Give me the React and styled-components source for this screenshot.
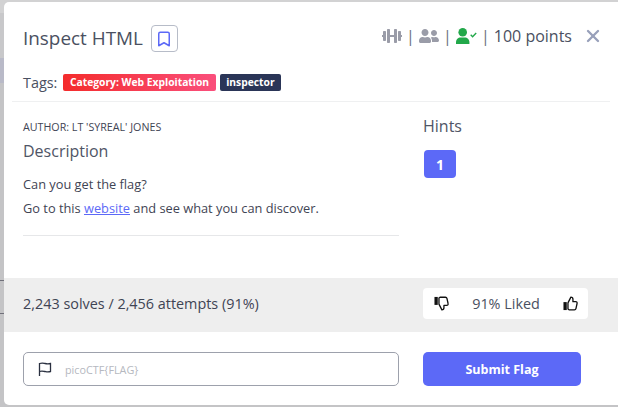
import React from 'react';
import styled, { createGlobalStyle } from 'styled-components';
import { Bookmark, X } from 'lucide-react';
import { FaDumbbell, FaUserFriends } from 'react-icons/fa';

const GlobalStyle = createGlobalStyle`
  html, body {
    margin: 0;
    padding: 0;
    background: #c4c4c6;
    font-family: "Open Sans", "Liberation Sans", sans-serif;
    overflow: hidden;
  }
`;

const Backdrop = styled.div`
  width: 618px;
  height: 407px;
  padding: 2px 0 2px 4px;
  box-sizing: border-box;
  background: linear-gradient(
    180deg,
    #d2d2d3 0 13px,
    #c8c8ca 13px 58px,
    #b9bac8 58px 83px,
    #c4c4c6 83px 280px,
    #70707a 280px 281px,
    #c4c4c6 281px 313px,
    #70707a 313px 314px,
    #c4c4c6 314px
  );
`;

const Modal = styled.div`
  height: 403px;
  background: #fff;
  border-radius: 5px 0 0 5px;
  display: flex;
  flex-direction: column;
  color: #3f4454;
`;

const Header = styled.div`
  height: 99px;
  margin: 0 8px 0 8px;
  padding: 0 7px 0 11px;
  border-bottom: 1px solid #eff0f1;
`;

const TitleRow = styled.div`
  display: flex;
  align-items: center;
  height: 33px;
  padding-top: 19px;
`;

const Title = styled.h1`
  margin: 0;
  font-size: 18.9px;
  font-weight: 400;
  color: #4a5061;
`;

const BookmarkButton = styled.div`
  width: 27px;
  height: 27px;
  margin: 2px 0 0 8px;
  border: 1px solid #b7bcc8;
  border-radius: 4px;
  box-sizing: border-box;
  display: flex;
  align-items: center;
  justify-content: center;
  color: #5c69f7;
`;

const Stats = styled.div`
  margin: 0 0 3px auto;
  display: flex;
  align-items: center;
  font-size: 16px;
  color: #4a5061;
`;

const Sep = styled.span`
  width: 17px;
  text-align: center;
  color: #6b7080;
`;

const CloseButton = styled.span`
  margin: 0 0 3px 11px;
  display: flex;
  color: #98a0ba;
`;

const TagRow = styled.div`
  display: flex;
  align-items: center;
  margin-top: 19px;
  gap: 4px;
  font-size: 14.4px;
  color: #4a5061;
`;

const TagLabel = styled.span`
  margin-right: 2px;
`;

const Tag = styled.span`
  height: 17px;
  line-height: 17px;
  padding: 0 6.5px;
  border-radius: 2px;
  font-size: 10.3px;
  font-weight: 700;
  color: #fff;
  background: ${props => props.$bg};
`;

const Body = styled.div`
  flex: 1;
  display: grid;
  grid-template-columns: 376px 1fr;
  column-gap: 24px;
  padding: 0 0 0 19px;
`;

const Author = styled.div`
  margin-top: 17px;
  font-size: 10.7px;
  line-height: 16px;
`;

const Heading = styled.h2`
  margin: 0;
  font-size: 16px;
  font-weight: 400;
  line-height: 22px;
  color: #4f5566;
`;

const DescHeading = styled(Heading)`
  margin-top: 5px;
`;

const HintsHeading = styled(Heading)`
  margin-top: 13px;
`;

const Paragraph = styled.div`
  margin-top: 10px;
  font-size: 12.8px;
  color: #3f4454;
`;

const Line = styled.div`
  line-height: 24px;
`;

const Link = styled.a`
  color: #5c69f7;
  text-decoration: underline;
`;

const Rule = styled.hr`
  margin: 15px 0 0;
  border: 0;
  border-top: 1px solid #e6e7e9;
`;

const HintButton = styled.div`
  width: 32px;
  height: 28px;
  margin: 13px 0 0 1px;
  background: #5c69f7;
  border-radius: 4px;
  color: #fff;
  font-size: 14px;
  font-weight: 700;
  display: flex;
  align-items: center;
  justify-content: center;
`;

const SolvesBar = styled.div`
  height: 54px;
  background: #eeeeee;
  display: grid;
  grid-template-columns: 376px 165px;
  column-gap: 24px;
  align-items: center;
  padding: 0 0 3px 19px;
  box-sizing: border-box;
  font-size: 14.4px;
  color: #3f4454;
`;

const LikeBox = styled.div`
  height: 31px;
  background: #fff;
  border-radius: 4px;
  display: flex;
  align-items: center;
  justify-content: space-between;
  padding: 0 10px 0 11px;
  color: #4a5061;
`;

const ThumbSvg = styled.svg`
  width: 15px;
  height: 15px;
  transform: ${props => (props.$down ? 'scaleY(-1)' : 'none')};
`;

const FormRow = styled.div`
  height: 73px;
  display: grid;
  grid-template-columns: 376px 158px;
  column-gap: 24px;
  padding: 20px 0 0 19px;
  box-sizing: border-box;
`;

const FlagInput = styled.div`
  height: 34px;
  border: 1px solid #9da1ac;
  border-radius: 5px;
  display: flex;
  align-items: center;
  gap: 12px;
  padding-left: 13px;
  box-sizing: border-box;
  font-size: 10.8px;
  color: #b5b8c0;
`;

const SubmitButton = styled.div`
  height: 34px;
  background: #5c69f7;
  border-radius: 5px;
  color: #fff;
  font-size: 12.5px;
  font-weight: 700;
  display: flex;
  align-items: center;
  justify-content: center;
`;

const UserCheckIcon = () => (
  <svg width="21" height="16" viewBox="0 0 21 16">
    <circle cx="6.7" cy="4.3" r="4.3" fill="#22a84a" />
    <path d="M0 16v-1.8C0 11.3 2.2 9.5 4.5 9.5h4.4c2.3 0 4.5 1.8 4.5 4.7V16z" fill="#22a84a" />
    <path d="M14.7 6.8l1.9 1.9 3.6-3.7" fill="none" stroke="#22a84a" strokeWidth="1.4" />
  </svg>
);

const FlagIcon = () => (
  <svg width="16" height="16" viewBox="0 0 16 16" fill="none" stroke="#2a3040" strokeWidth="1.3">
    <path d="M2.5 15V2.5c3-1 4.5-.2 5.5 0s3 .6 5.5 0v8c-2.5.6-4 .2-5.5 0s-3-1-5.5 0" />
  </svg>
);

const ThumbIcon = ({ down }) => (
  <ThumbSvg $down={down} viewBox="0 0 16 16">
    <rect x="0.5" y="6.5" width="3.5" height="8.5" fill="#111" />
    <path
      d="M5.3 7.3L8.4 1.2c1.5 0 2.2 1 2.2 2.2V6h3c1 0 1.7.9 1.4 2l-1.2 5.4c-.2.9-.8 1.3-1.6 1.3H6.4l-1.1-.8z"
      fill="#fff"
      stroke="#111"
      strokeWidth="1.4"
      strokeLinejoin="round"
    />
  </ThumbSvg>
);

const App = () => (
  <Backdrop>
    <GlobalStyle />
    <Modal>
      <Header>
        <TitleRow>
          <Title>Inspect HTML</Title>
          <BookmarkButton>
            <Bookmark size={18} strokeWidth={2} />
          </BookmarkButton>
          <Stats>
            <FaDumbbell size={20} color="#9a9ca8" />
            <Sep>|</Sep>
            <FaUserFriends size={20} color="#9a9ca8" />
            <Sep>|</Sep>
            <UserCheckIcon />
            <Sep>|</Sep>
            <span>100 points</span>
          </Stats>
          <CloseButton>
            <X size={20} strokeWidth={2.8} />
          </CloseButton>
        </TitleRow>
        <TagRow>
          <TagLabel>Tags:</TagLabel>
          <Tag $bg="linear-gradient(90deg, #f42c2c, #fa4f7c)">Category: Web Exploitation</Tag>
          <Tag $bg="#2a3557">inspector</Tag>
        </TagRow>
      </Header>
      <Body>
        <div>
          <Author>AUTHOR: LT 'SYREAL' JONES</Author>
          <DescHeading>Description</DescHeading>
          <Paragraph>
            <Line>Can you get the flag?</Line>
            <Line>Go to this <Link href="#">website</Link> and see what you can discover.</Line>
          </Paragraph>
          <Rule />
        </div>
        <div>
          <HintsHeading>Hints</HintsHeading>
          <HintButton>1</HintButton>
        </div>
      </Body>
      <SolvesBar>
        <span>2,243 solves / 2,456 attempts (91%)</span>
        <LikeBox>
          <ThumbIcon down />
          <span>91% Liked</span>
          <ThumbIcon />
        </LikeBox>
      </SolvesBar>
      <FormRow>
        <FlagInput>
          <FlagIcon />
          <span>picoCTF{'{FLAG}'}</span>
        </FlagInput>
        <SubmitButton>Submit Flag</SubmitButton>
      </FormRow>
    </Modal>
  </Backdrop>
);

export default App;
